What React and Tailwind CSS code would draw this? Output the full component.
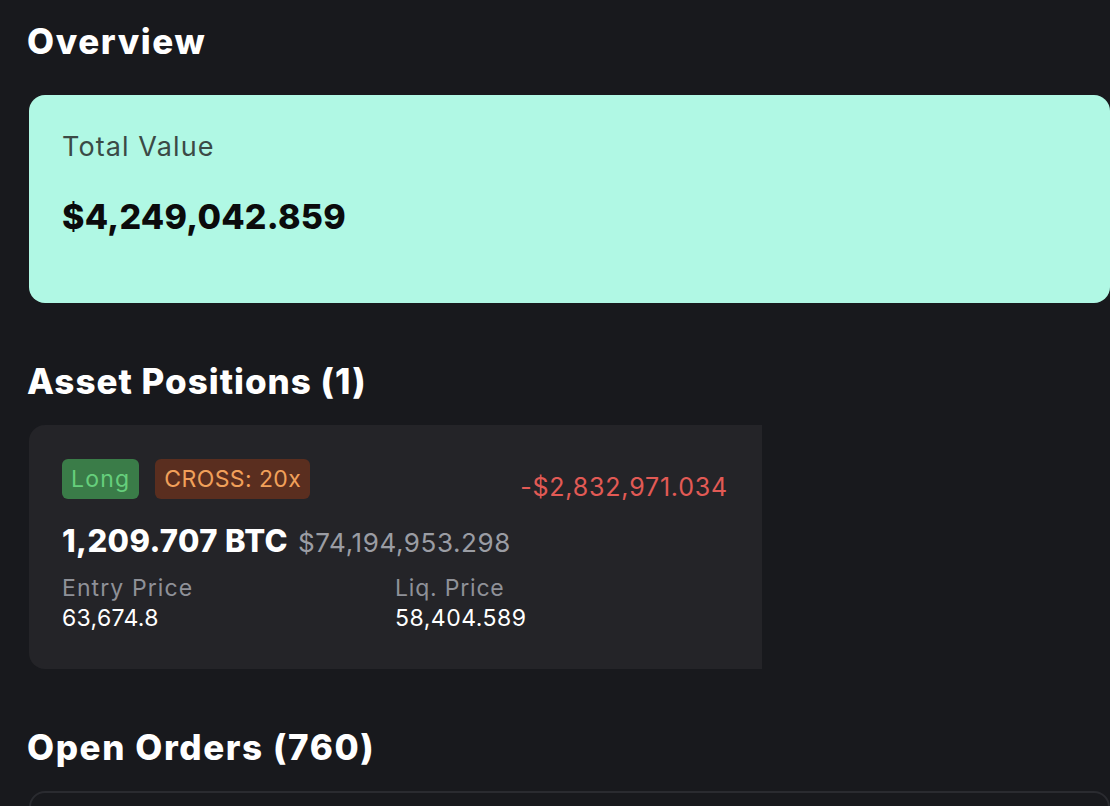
export default function App() {
  const font = { fontFamily: 'Inter, "Noto Sans", sans-serif' };
  return (
    <div className="min-h-screen w-full overflow-hidden bg-[#18191d] pl-[29px] pt-[19px]" style={font}>
      <h1 className="-ml-[2px] text-[35px] font-extrabold leading-[44px] tracking-[1.6px] text-white">Overview</h1>

      <div className="mt-[32px] h-[208px] rounded-[16px] bg-[#b0f8e4] pl-[33px] pt-[36px]">
        <div className="text-[27px] leading-[32px] tracking-[1.1px] text-[#3b4a46]">Total Value</div>
        <div className="mt-[34px] text-[34px] font-extrabold leading-[40px] tracking-[0.25px] text-[#0b0b0c]">$4,249,042.859</div>
      </div>

      <h2 className="-ml-[2px] mt-[56px] text-[35px] font-extrabold leading-[44px] tracking-[1px] text-white">Asset Positions (1)</h2>

      <div className="mt-[22px] w-[733px] rounded-l-[16px] bg-[#242428] pb-[36px] pl-[33px] pr-[34px] pt-[34px]">
        <div className="flex items-start justify-between">
          <div className="flex gap-[16px]">
            <span className="flex h-[40px] items-center rounded-[6px] bg-[#3a7c48] px-[9px] text-[23px] tracking-[1.2px] text-[#66cf7c]">Long</span>
            <span className="flex h-[40px] items-center rounded-[6px] bg-[#5a2e1f] px-[9px] text-[23px] tracking-[0.4px] text-[#f1a05a]">CROSS: 20x</span>
          </div>
          <span className="mt-[12px] text-[25px] leading-[32px] tracking-[0.8px] text-[#e25a55]">-$2,832,971.034</span>
        </div>
        <div className="mt-[20px] flex items-baseline gap-[10px]">
          <span className="text-[31px] font-extrabold leading-[36px] tracking-[0.4px] text-white">1,209.707 BTC</span>
          <span className="text-[26px] leading-[36px] tracking-[0.6px] text-[#9b9da4]">$74,194,953.298</span>
        </div>
        <div className="mt-[12px] grid grid-cols-[333px_1fr]">
          <div>
            <div className="text-[23px] leading-[30px] tracking-[1.1px] text-[#8f9198]">Entry Price</div>
            <div className="text-[23px] leading-[30px] tracking-[0.3px] text-white">63,674.8</div>
          </div>
          <div>
            <div className="text-[23px] leading-[30px] tracking-[0.8px] text-[#8f9198]">Liq. Price</div>
            <div className="text-[23px] leading-[30px] tracking-[0.5px] text-white">58,404.589</div>
          </div>
        </div>
      </div>

      <h2 className="-ml-[2px] mt-[56px] text-[35px] font-extrabold leading-[44px] tracking-[1.6px] text-white">Open Orders (760)</h2>

      <div className="mt-[22px] h-[200px] rounded-[16px] border-2 border-[#2a2b30] bg-[#18191d]"></div>
    </div>
  );
}
